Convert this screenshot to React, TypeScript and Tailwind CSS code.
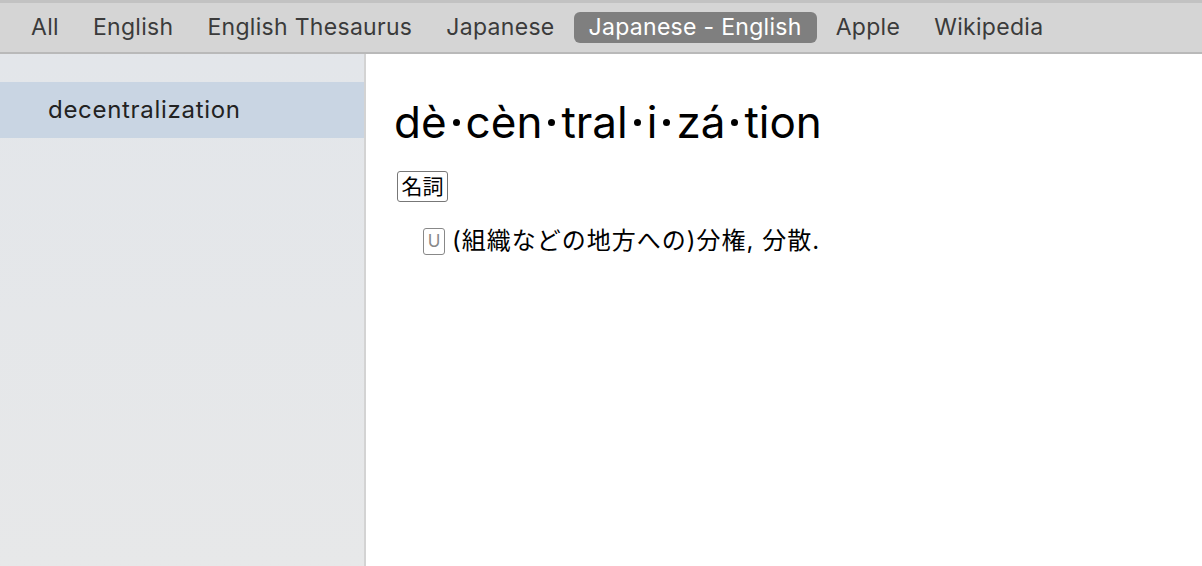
const tabs = ["All", "English", "English Thesaurus", "Japanese", "Japanese - English", "Apple", "Wikipedia"];
const active = "Japanese - English";

const font = { fontFamily: "Inter, 'Noto Sans CJK JP', sans-serif" };

export default function App() {
  return (
    <div className="flex flex-col w-[1202px] h-[566px] overflow-hidden bg-white" style={font}>
      {/* tab bar */}
      <div className="flex-shrink-0 h-[54px] bg-[#d5d5d5] border-t-[3px] border-t-[#c2c2c2] border-b-[2px] border-b-[#b9b9b9] flex items-center pl-[16px] gap-[4px]">
        {tabs.map((t) => (
          <div
            key={t}
            className={`h-[31px] flex items-center px-[15px] rounded-[6px] text-[23px] tracking-[0.3px] ${
              t === active ? "bg-[#7f7f7f] text-white" : "text-[#3b3b3b]"
            }`}
          >
            {t}
          </div>
        ))}
      </div>

      <div className="flex flex-1 min-h-0">
        {/* sidebar */}
        <div className="w-[366px] flex-shrink-0 bg-gradient-to-b from-[#e3e6ea] to-[#e7e8e9] border-r-[2px] border-r-[#d3d3d3] pt-[28px]">
          <div className="h-[56px] bg-[#c9d5e3] flex items-center pl-[48px] text-[24px] tracking-[0.7px] text-[#222]">
            decentralization
          </div>
        </div>

        {/* content */}
        <div className="flex-1 pl-[28px] pt-[38px] text-black">
          <div className="text-[44px] leading-[60px]">
            dè<Dot />cèn<Dot />tral<Dot />i<Dot />zá<Dot />tion
          </div>
          <div className="mt-[19px] flex pl-[3px]">
            <span className="inline-flex items-center h-[31px] px-[3.5px] border-[1.5px] border-[#777] rounded-[3px] text-[21px] leading-none">
              名詞
            </span>
          </div>
          <div className="mt-[21px] pl-[29px] flex items-center gap-[7px] text-[24px] tracking-[1px]">
            <span className="inline-flex items-center justify-center w-[22px] h-[27px] border-[1.5px] border-[#888] rounded-[3px] text-[17px] tracking-normal text-[#888] leading-none">
              U
            </span>
            <span>(組織などの地方への)分権, 分散.</span>
          </div>
        </div>
      </div>
    </div>
  );
}

function Dot() {
  return <span className="inline-block w-[7px] h-[7px] rounded-full bg-black mx-[6px] align-[12px]" />;
}
